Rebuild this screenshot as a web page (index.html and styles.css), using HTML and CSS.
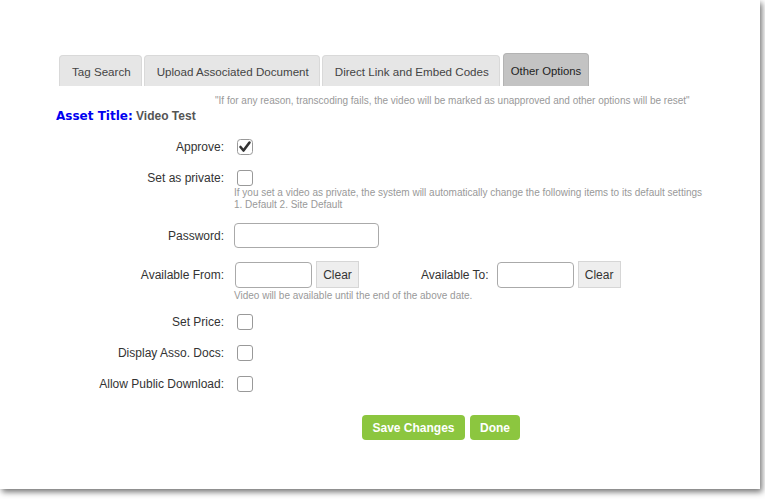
FILE: index.html
```html
<!DOCTYPE html>
<html lang="en">

<head>
    <meta charset="UTF-8">
    <title>Edit Asset | Other Options</title>
    <link rel="stylesheet" href="styles.css">
</head>

<body>
    <div class="frame">
        <ul class="tabs">
            <li>Tag Search</li>
            <li>Upload Associated Document</li>
            <li>Direct Link and Embed Codes</li>
            <li class="active">Other Options</li>
        </ul>

        <p class="notice">"If for any reason, transcoding fails, the video will be marked as unapproved and other options will be reset"</p>

        <h2 class="asset_title"><span>Asset Title:</span> Video Test</h2>

        <form class="options">
            <div class="row row_approve">
                <label>Approve:</label>
                <div class="line">
                    <span class="check">
                        <svg width="16" height="16" viewBox="0 0 16 16">
                            <rect x="0.5" y="0.5" width="15" height="15" rx="3" fill="#fff" stroke="#999"/>
                            <polyline points="3.5,8 6.5,11.5 12.5,3.5" fill="none" stroke="#333" stroke-width="2.6" stroke-linecap="round" stroke-linejoin="round"/>
                        </svg>
                    </span>
                </div>
            </div>

            <div class="row row_private">
                <label>Set as private:</label>
                <div class="line"><span class="check"></span></div>
                <p class="hint">If you set a video as private, the system will automatically change the following items to its default settings<br>1. Default 2. Site Default</p>
            </div>

            <div class="row row_password">
                <label>Password:</label>
                <div class="line"><input type="password" class="text_input pw"></div>
            </div>

            <div class="row row_dates">
                <label>Available From:</label>
                <div class="line">
                    <input type="text" class="text_input date">
                    <button type="button" class="btn_clear">Clear</button>
                    <span class="to_label">Available To:</span>
                    <input type="text" class="text_input date">
                    <button type="button" class="btn_clear">Clear</button>
                </div>
                <p class="hint">Video will be available until the end of the above date.</p>
            </div>

            <div class="row row_price">
                <label>Set Price:</label>
                <div class="line"><span class="check"></span></div>
            </div>

            <div class="row row_docs">
                <label>Display Asso. Docs:</label>
                <div class="line"><span class="check"></span></div>
            </div>

            <div class="row row_download">
                <label>Allow Public Download:</label>
                <div class="line"><span class="check"></span></div>
            </div>

            <div class="actions">
                <button type="button" class="btn_green btn_save">Save Changes</button>
                <button type="button" class="btn_green btn_done">Done</button>
            </div>
        </form>
    </div>
</body>

</html>
```

FILE: styles.css
```css
* {
    box-sizing: border-box;
    margin: 0;
    padding: 0;
}

html,
body {
    height: 499px;
}

body {
    background: #fff;
    font-family: 'Liberation Sans', Arial, sans-serif;
    font-size: 12px;
    color: #333;
}

.frame {
    width: 760px;
    height: 489px;
    background: #fff;
    box-shadow: 2px 3px 6px rgba(0, 0, 0, 0.55);
    padding-top: 53px;
}

/* onglets */
.tabs {
    list-style: none;
    display: flex;
    align-items: flex-end;
    gap: 2px;
    padding-left: 59px;
    height: 33px;
}

.tabs li {
    height: 31px;
    line-height: 31px;
    padding: 0 10px 0 12px;
    background: #e6e6e6;
    border: 1px solid #d9d9d9;
    border-bottom: none;
    border-radius: 4px 4px 0 0;
    font-size: 11.6px;
    color: #444;
}

.tabs li.active {
    height: 33px;
    line-height: 35px;
    margin-left: 1px;
    padding: 0 7px;
    background: #c3c3c3;
    border-color: #b3b3b3;
    font-size: 11.3px;
    color: #222;
}

.notice {
    padding-left: 215px;
    margin-top: 9px;
    font-size: 10px;
    line-height: 12px;
    color: #999;
}

.asset_title {
    padding-left: 56px;
    margin-top: 1px;
    font-size: 12px;
    line-height: 16px;
    color: #555;
}

.asset_title span {
    color: #0000f0;
    font-family: 'DejaVu Sans', sans-serif;
    font-size: 12px;
}

/* formulaire */
.row {
    display: grid;
    grid-template-columns: 224px 1fr;
    column-gap: 10px;
    align-items: center;
}

.row label {
    text-align: right;
    color: #333;
}

.line {
    display: flex;
    align-items: center;
}

.hint {
    grid-column: 2;
    font-size: 10px;
    line-height: 12px;
    color: #999;
}

.check {
    display: block;
    width: 16px;
    height: 16px;
    margin-left: 3px;
    border: 1px solid #999;
    border-radius: 3px;
    background: #fff;
}

.row_approve .check {
    border: none;
}

.row_approve .check svg {
    display: block;
}

.row_approve { margin-top: 15px; }
.row_private { margin-top: 15px; }
.row_password { margin-top: 12px; }
.row_dates { margin-top: 13px; }
.row_price { margin-top: 12px; }
.row_docs { margin-top: 15px; }
.row_download { margin-top: 15px; }

.row_private .hint { margin-top: 1px; }
.row_dates .hint { margin-top: 2px; }

.text_input {
    border: 1px solid #aaa;
    border-radius: 4px;
    background: #fff;
    font-family: inherit;
}

.text_input.pw {
    width: 145px;
    height: 25px;
}

.text_input.date {
    width: 77px;
    height: 26px;
    margin-left: 1px;
}

.btn_clear {
    margin-left: 4px;
    width: 43px;
    height: 27px;
    background: #eee;
    border: 1px solid #d6d6d6;
    font-family: inherit;
    font-size: 12px;
    color: #333;
}

.to_label {
    margin-left: 62px;
    margin-right: 7px;
    color: #333;
}

.actions {
    display: flex;
    gap: 5px;
    padding-left: 362px;
    margin-top: 23px;
}

.btn_green {
    height: 25px;
    padding: 0;
    background: #8cc63f;
    border: none;
    border-radius: 4px;
    color: #fff;
    font-family: 'Liberation Sans', sans-serif;
    font-weight: bold;
    font-size: 12px;
}

.btn_save {
    width: 103px;
}

.btn_done {
    width: 50px;
}
```
